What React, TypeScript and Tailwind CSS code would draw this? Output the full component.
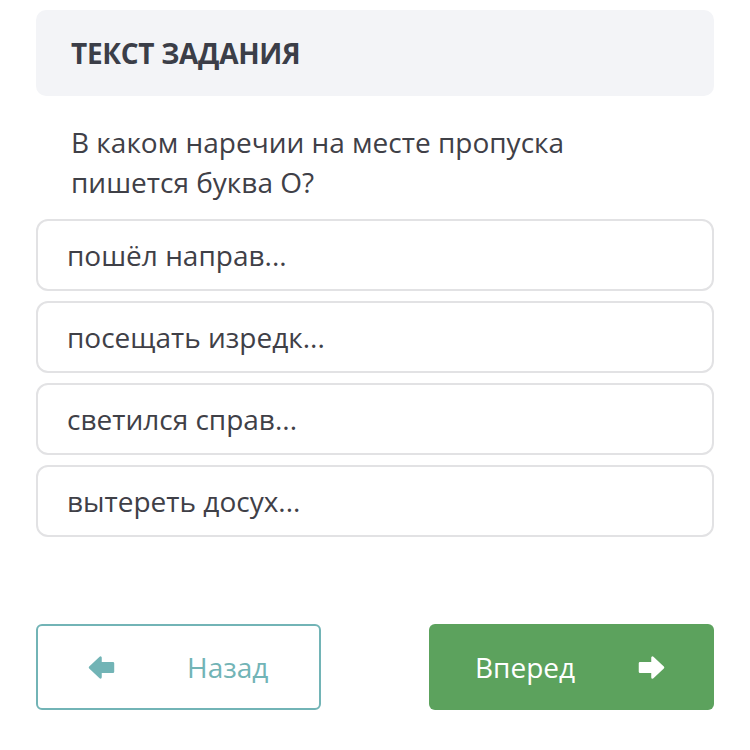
import React from "react";

const options = ["пошёл направ...", "посещать изредк...", "светился справ...", "вытереть досух..."];

// chunky arrows, as in the reference buttons
const ArrowLeft = ({ className }: { className?: string }) => (
  <svg viewBox="0 0 26 24" className={className}>
    <polygon
      points="2,12 12,2.5 12,8 24,8 24,16 12,16 12,21.5"
      fill="currentColor"
      stroke="currentColor"
      strokeWidth="2.5"
      strokeLinejoin="round"
    />
  </svg>
);

const ArrowRight = ({ className }: { className?: string }) => (
  <svg viewBox="0 0 26 24" className={className}>
    <polygon
      points="24,12 14,2.5 14,8 2,8 2,16 14,16 14,21.5"
      fill="currentColor"
      stroke="currentColor"
      strokeWidth="2.5"
      strokeLinejoin="round"
    />
  </svg>
);

export default function App() {
  return (
    <div className="w-[750px] h-[750px] bg-white px-[36px] pt-[10px] font-['Open_Sans',sans-serif] text-[#3f4047]">
      {/* task header */}
      <div className="h-[86px] rounded-[10px] bg-[#f3f4f7] flex items-center px-[35px]">
        <h1 className="text-[28px] font-bold text-[#3b3e48] tracking-[-0.3px]">ТЕКСТ ЗАДАНИЯ</h1>
      </div>

      {/* question */}
      <p className="px-[35px] pt-[26px] pb-[17px] text-[28px] leading-[40px]">
        В каком наречии на месте пропуска
        <br />
        пишется буква О?
      </p>

      {/* answers */}
      <div className="flex flex-col gap-[10px]">
        {options.map((o) => (
          <div
            key={o}
            className="h-[72px] rounded-[12px] border-2 border-[#e2e2e4] flex items-center px-[29px] text-[28px]"
          >
            {o}
          </div>
        ))}
      </div>

      {/* nav buttons */}
      <div className="flex justify-between mt-[87px]">
        <button className="w-[285px] h-[86px] rounded-[6px] border-2 border-[#72b4b6] flex items-center text-[#72b4b6] text-[28px]">
          <ArrowLeft className="w-[27px] h-[25px] ml-[50px]" />
          <span className="ml-[72px]">Назад</span>
        </button>
        <button className="w-[285px] h-[86px] rounded-[6px] bg-[#5ca25d] flex items-center text-white text-[28px]">
          <span className="ml-[46px]">Вперед</span>
          <ArrowRight className="w-[29px] h-[25px] ml-[62px]" />
        </button>
      </div>
    </div>
  );
}
